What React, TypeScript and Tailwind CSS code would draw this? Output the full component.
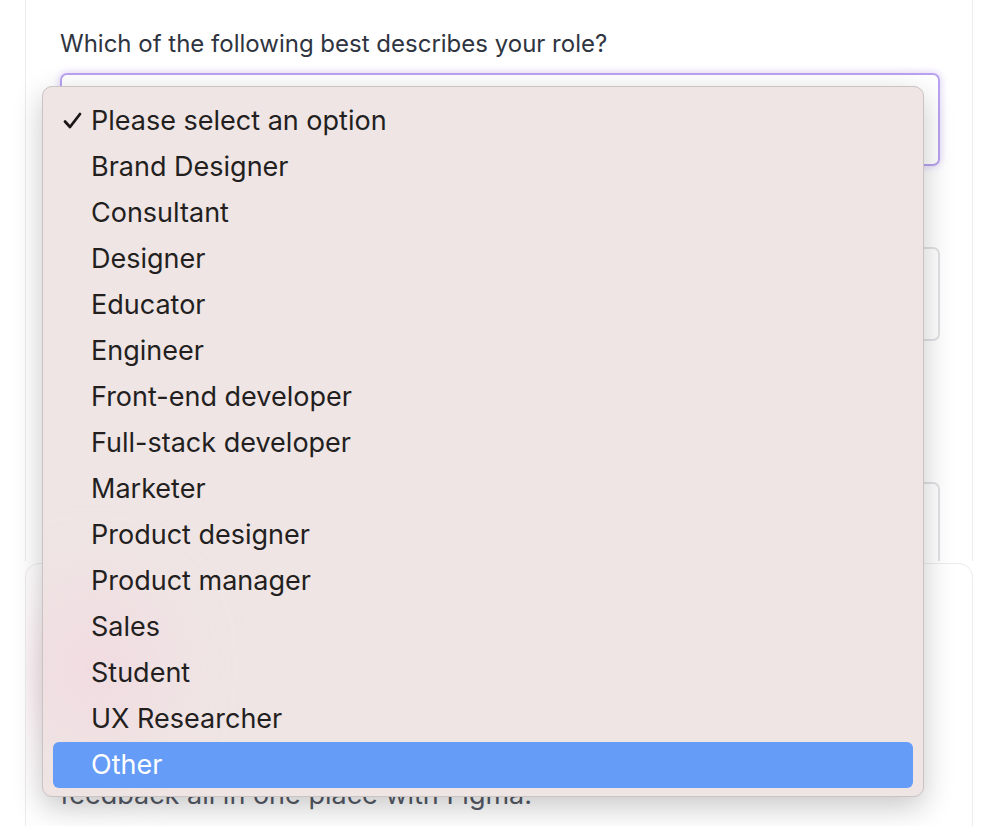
import React from 'react';

const OPTIONS = [
  'Please select an option',
  'Brand Designer',
  'Consultant',
  'Designer',
  'Educator',
  'Engineer',
  'Front-end developer',
  'Full-stack developer',
  'Marketer',
  'Product designer',
  'Product manager',
  'Sales',
  'Student',
  'UX Researcher',
  'Other',
];

const SELECTED = 0;
const HIGHLIGHTED = OPTIONS.length - 1;

function RoleMenu() {
  return (
    <div className="absolute left-[42px] top-[86px] w-[882px] overflow-hidden rounded-[10px] border border-[#c9c3c2] bg-[#efe5e4] pt-[11px] pb-[8px] px-[10px] shadow-[0_10px_30px_rgba(0,0,0,0.22)]">
      <div className="pointer-events-none absolute -left-[20px] top-[500px] h-[160px] w-[140px] rounded-full bg-[#f2d8e0] opacity-70 blur-2xl" />
      <ul className="relative flex flex-col">
        {OPTIONS.map((opt, i) => (
          <li
            key={opt}
            className={
              'relative flex h-[46px] items-center rounded-[6px] pl-[38px] text-[27px] ' +
              (i === HIGHLIGHTED ? 'bg-[#659cf7] text-white' : 'text-[#231f1f]')
            }
          >
            {i === SELECTED && (
              <svg className="absolute left-[10px] top-[14px]" width="19" height="17" viewBox="0 0 19 17">
                <path d="M2 9.5 L7 15 L17 2" fill="none" stroke="#1c1818" strokeWidth="2.8" strokeLinecap="round" strokeLinejoin="round" />
              </svg>
            )}
            {opt}
          </li>
        ))}
      </ul>
    </div>
  );
}

export default function App() {
  return (
    <div className="relative flex h-[826px] w-[990px] flex-col overflow-hidden bg-white font-['Inter',sans-serif]">
      {/* survey card */}
      <div className="ml-[25px] mr-[17px] flex h-[561px] shrink-0 flex-col border-x border-[#ececee] pl-[34px] pt-[26px]">
        <p className="shrink-0 text-[24px] leading-[36px] text-[#2f3441]">Which of the following best describes your role?</p>
        <div className="mt-[11px] h-[93px] w-[880px] shrink-0 rounded-[7px] border-2 border-[#b9a2ef] shadow-[0_0_6px_2px_rgba(185,162,239,0.35)]" />
        <div className="mt-[81px] h-[94px] w-[880px] shrink-0 rounded-[7px] border-2 border-[#e2e2e6]" />
        <div className="mt-[141px] h-[79px] w-[880px] shrink-0 rounded-t-[7px] border-2 border-b-0 border-[#e2e2e6]" />
      </div>

      {/* next card */}
      <div className="relative ml-[25px] mr-[17px] mt-[2px] h-[300px] shrink-0 overflow-hidden rounded-[14px] border border-[#ececee] pl-[34px] pt-[162px]">
        <div className="absolute left-[0px] top-[30px] h-[160px] w-[140px] rounded-full bg-[#f6d3de] opacity-60 blur-2xl" />
        <p className="relative text-[27px] leading-[46px] text-[#555a66]">
          Collaborate, iterate and gather
          <br />
          feedback all in one place with Figma.
        </p>
      </div>

      <RoleMenu />
    </div>
  );
}
